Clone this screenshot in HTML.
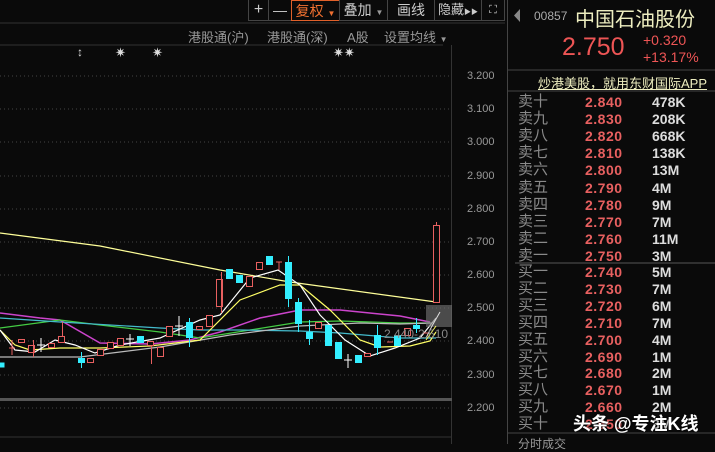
<!DOCTYPE html>
<html><head><meta charset="utf-8"><style>
html,body{margin:0;padding:0;background:#0a0a0a;width:715px;height:444px;overflow:hidden;font-family:"Liberation Sans","Noto Sans CJK SC",sans-serif}
.a{position:absolute;white-space:nowrap}
.tb{position:absolute;top:0;height:21px;border:1px solid #444;border-top:none;box-sizing:border-box;color:#ccc;font-size:14px;line-height:20px;text-align:center;white-space:nowrap;overflow:hidden}
.tab{color:#999;font-size:13px}
.row{position:absolute;left:0;width:207px;height:16px;font-size:14px;line-height:16px}
.row .l{position:absolute;left:10px;color:#8a8a8a;font-size:15px}
.row .p{position:absolute;left:77px;color:#e86060;font-weight:bold;letter-spacing:0.5px}
.row .v{position:absolute;left:144px;color:#ddd;font-weight:bold}
</style></head><body>
<svg class="a" style="left:0;top:0" width="715" height="444">
<line x1="0" y1="23" x2="505" y2="23" stroke="#333"/>
<line x1="0" y1="45" x2="443" y2="45" stroke="#333"/>
<g stroke="#444" stroke-dasharray="1,3">
<line x1="0" y1="76" x2="451" y2="76"/><line x1="0" y1="109" x2="451" y2="109"/><line x1="0" y1="142" x2="451" y2="142"/><line x1="0" y1="176" x2="451" y2="176"/><line x1="0" y1="209" x2="451" y2="209"/><line x1="0" y1="242" x2="451" y2="242"/><line x1="0" y1="275" x2="451" y2="275"/><line x1="0" y1="308" x2="451" y2="308"/><line x1="0" y1="341" x2="451" y2="341"/><line x1="0" y1="375" x2="451" y2="375"/><line x1="0" y1="408" x2="451" y2="408"/>
</g>
<line x1="451.5" y1="45" x2="451.5" y2="444" stroke="#333"/>
<rect x="0" y="398" width="452" height="3" fill="#555"/>
<line x1="0" y1="437" x2="452" y2="437" stroke="#333"/>
<line x1="507.5" y1="0" x2="507.5" y2="444" stroke="#444"/>
<line x1="508" y1="70" x2="715" y2="70" stroke="#444"/>
<line x1="508" y1="91" x2="715" y2="91" stroke="#444"/>
<line x1="515" y1="263" x2="715" y2="263" stroke="#555"/>
<line x1="508" y1="433" x2="715" y2="433" stroke="#444"/>
<polygon points="520,9 520,22 514,15.5" fill="#888"/>
<polyline fill="none" stroke="#ffff99" stroke-width="1.2" points="0,233 100,246 220,270 290,282 436,302"/>
<polyline fill="none" stroke="#cc44cc" stroke-width="1.5" points="0,313 40,318 60,320 100,343 150,344 190,340 220,332 260,318 300,310 340,310 400,316 430,322"/>
<polyline fill="none" stroke="#44cc44" stroke-width="1.2" points="0,328 60,320 100,325 160,332 200,338 250,330 300,322 340,321 400,323 430,323"/>
<polyline fill="none" stroke="#44bbcc" stroke-width="1.2" points="0,318 60,322 160,328 200,330 240,330 300,331 340,333 400,338 436,338"/>
<polyline fill="none" stroke="#bbbbbb" stroke-width="1.2" points="0,357 80,357 160,347 230,335 300,326 360,323 400,324 432,323"/>
<polyline fill="none" stroke="#ffff66" stroke-width="1.2" points="0,330 15,345 30,350 60,348 100,348 150,346 200,340 240,300 280,285 300,285 330,310 360,340 380,347 410,346 430,341 436,332"/>
<polyline fill="none" stroke="#ffffff" stroke-width="1.2" points="0,330 15,350 35,352 55,340 75,345 95,353 120,345 160,338 200,320 220,315 250,278 278,270 300,285 320,315 345,340 370,356 395,348 420,338 436,318"/>
<g stroke="#e86060" fill="#0a0a0a" stroke-width="1">
<rect x="18.5" y="339.5" width="6" height="3"/><rect x="28.5" y="345.5" width="6" height="7"/><rect x="48.5" y="343.5" width="6" height="4"/><rect x="58.5" y="336.5" width="6" height="6"/>
<rect x="87.5" y="358.5" width="6" height="4"/><rect x="97.5" y="349.5" width="6" height="6"/><rect x="107.5" y="342.5" width="6" height="6"/><rect x="117.5" y="338.5" width="6" height="7"/>
<rect x="147.5" y="341.5" width="6" height="4"/><rect x="157.5" y="347.5" width="6" height="9"/><rect x="166.5" y="326.5" width="6" height="10"/><rect x="196.5" y="326.5" width="6" height="3"/><rect x="206.5" y="315.5" width="6" height="11"/>
<rect x="216.5" y="279.5" width="6" height="27"/><rect x="246.5" y="276.5" width="6" height="10"/><rect x="256.5" y="262.5" width="6" height="7"/><rect x="315.5" y="322.5" width="6" height="6"/><rect x="364.5" y="353.5" width="6" height="3"/><rect x="404.5" y="328.5" width="6" height="7"/><rect x="433.5" y="225.5" width="6" height="77"/>
<line x1="221.5" y1="272" x2="221.5" y2="313"/><line x1="151.5" y1="345" x2="151.5" y2="364"/><line x1="62.5" y1="322" x2="62.5" y2="336"/><line x1="436.5" y1="222" x2="436.5" y2="225"/><line x1="33.5" y1="340" x2="33.5" y2="357"/><line x1="279" y1="262" x2="279" y2="270"/><line x1="276" y1="262" x2="282" y2="262"/><line x1="12" y1="340" x2="12" y2="355"/><line x1="9" y1="348" x2="15" y2="348"/><line x1="423" y1="333" x2="429" y2="333"/><line x1="387" y1="342" x2="393" y2="342"/>
</g>
<g fill="#33eeff" stroke="#33eeff">
<rect x="0" y="363" width="4" height="4"/><rect x="78.5" y="358.5" width="6" height="4"/><rect x="137.5" y="336.5" width="6" height="6"/><rect x="186.5" y="322.5" width="6" height="15"/><rect x="226.5" y="269.5" width="6" height="9"/><rect x="236.5" y="275.5" width="6" height="7"/><rect x="266.5" y="256.5" width="6" height="8"/><rect x="285.5" y="262.5" width="6" height="36"/><rect x="295.5" y="302.5" width="6" height="21"/><rect x="306.5" y="332.5" width="6" height="6"/><rect x="325.5" y="325.5" width="6" height="20"/><rect x="335.5" y="342.5" width="6" height="16"/><rect x="355.5" y="355.5" width="6" height="7"/><rect x="374.5" y="335.5" width="6" height="12"/><rect x="394.5" y="335.5" width="6" height="10"/><rect x="413.5" y="325.5" width="6" height="3"/>
<line x1="81.5" y1="352" x2="81.5" y2="368"/><line x1="189.5" y1="318" x2="189.5" y2="347"/><line x1="288.5" y1="256" x2="288.5" y2="307"/><line x1="298.5" y1="298" x2="298.5" y2="332"/><line x1="309.5" y1="320" x2="309.5" y2="345"/><line x1="377.5" y1="325" x2="377.5" y2="355"/><line x1="416.5" y1="318" x2="416.5" y2="333"/>
</g>
<g stroke="#fff"><line x1="41" y1="338" x2="41" y2="352"/><line x1="37" y1="345" x2="45" y2="345"/><line x1="130" y1="334" x2="130" y2="346"/><line x1="126" y1="339" x2="134" y2="339"/><line x1="179" y1="316" x2="179" y2="336"/><line x1="175" y1="326" x2="183" y2="326"/><line x1="348" y1="354" x2="348" y2="368"/><line x1="344" y1="360" x2="352" y2="360"/></g>
<rect x="426" y="305" width="26" height="22" fill="#777" opacity="0.6"/>
<polyline fill="none" stroke="#ddd" points="426,338 432,326 440,312"/>
<polyline fill="none" stroke="#ffff66" points="426,340 436,326"/>
</svg>
<div class="tb" style="left:248px;width:21px;font-size:16px">+</div>
<div class="tb" style="left:268px;width:24px">—</div>
<div class="tb" style="left:291px;width:49px;border:1px solid #e0602a;color:#f07030">复权 <span style="font-size:8px">▼</span></div>
<div class="tb" style="left:339px;width:49px">叠加 <span style="font-size:8px;color:#999">▼</span></div>
<div class="tb" style="left:387px;width:48px">画线</div>
<div class="tb" style="left:434px;width:48px;font-size:13px">隐藏<span style="font-size:7px">▶▶</span></div>
<div class="tb" style="left:481px;width:24px;font-size:11px">⛶</div>
<div class="a tab" style="left:188px;top:27px">港股通(沪)</div>
<div class="a tab" style="left:267px;top:27px">港股通(深)</div>
<div class="a tab" style="left:347px;top:27px">A股</div>
<div class="a tab" style="left:384px;top:27px">设置均线 <span style="font-size:8px">▼</span></div>
<div class="a" style="left:77px;top:45px;color:#ddd;font-size:12px">↕</div>
<div class="a" style="left:115px;top:45px;color:#ddd;font-size:13px">✷</div>
<div class="a" style="left:152px;top:45px;color:#ddd;font-size:13px">✷</div>
<div class="a" style="left:333px;top:45px;color:#ddd;font-size:13px">✷✷</div>
<div class="a" style="left:467px;top:69px;color:#999;font-size:11px;line-height:14px">
<div style="position:absolute;top:0">3.200</div><div style="position:absolute;top:33px">3.100</div><div style="position:absolute;top:66px">3.000</div><div style="position:absolute;top:100px">2.900</div><div style="position:absolute;top:133px">2.800</div><div style="position:absolute;top:166px">2.700</div><div style="position:absolute;top:199px">2.600</div><div style="position:absolute;top:232px">2.500</div><div style="position:absolute;top:265px">2.400</div><div style="position:absolute;top:299px">2.300</div><div style="position:absolute;top:332px">2.200</div></div>
<div class="a" style="left:384px;top:327px;color:#888;font-size:12px">2.440-2.510</div>
<div class="a" style="left:534px;top:9px;color:#aaa;font-size:12px">00857</div>
<div class="a" style="left:575px;top:3px;color:#eeeec0;font-size:20px">中国石油股份</div>
<div class="a" style="left:562px;top:33px;color:#ee5555;font-size:25px">2.750</div>
<div class="a" style="left:643px;top:32px;color:#ee5555;font-size:14px;line-height:17px">+0.320<br>+13.17%</div>
<div class="a" style="left:538px;top:73px;color:#eeeec0;font-size:13px;text-decoration:underline">炒港美股，就用东财国际APP</div>
<div class="a" style="left:508px;top:94px;width:207px">
<div class="row" style="top:0"><span class="l">卖十</span><span class="p">2.840</span><span class="v">478K</span></div>
<div class="row" style="top:17.1px"><span class="l">卖九</span><span class="p">2.830</span><span class="v">208K</span></div>
<div class="row" style="top:34.2px"><span class="l">卖八</span><span class="p">2.820</span><span class="v">668K</span></div>
<div class="row" style="top:51.3px"><span class="l">卖七</span><span class="p">2.810</span><span class="v">138K</span></div>
<div class="row" style="top:68.4px"><span class="l">卖六</span><span class="p">2.800</span><span class="v">13M</span></div>
<div class="row" style="top:85.5px"><span class="l">卖五</span><span class="p">2.790</span><span class="v">4M</span></div>
<div class="row" style="top:102.6px"><span class="l">卖四</span><span class="p">2.780</span><span class="v">9M</span></div>
<div class="row" style="top:119.7px"><span class="l">卖三</span><span class="p">2.770</span><span class="v">7M</span></div>
<div class="row" style="top:136.8px"><span class="l">卖二</span><span class="p">2.760</span><span class="v">11M</span></div>
<div class="row" style="top:153.9px"><span class="l">卖一</span><span class="p">2.750</span><span class="v">3M</span></div>
<div class="row" style="top:170px"><span class="l">买一</span><span class="p">2.740</span><span class="v">5M</span></div>
<div class="row" style="top:186.9px"><span class="l">买二</span><span class="p">2.730</span><span class="v">7M</span></div>
<div class="row" style="top:203.8px"><span class="l">买三</span><span class="p">2.720</span><span class="v">6M</span></div>
<div class="row" style="top:220.7px"><span class="l">买四</span><span class="p">2.710</span><span class="v">7M</span></div>
<div class="row" style="top:237.6px"><span class="l">买五</span><span class="p">2.700</span><span class="v">4M</span></div>
<div class="row" style="top:254.5px"><span class="l">买六</span><span class="p">2.690</span><span class="v">1M</span></div>
<div class="row" style="top:271.4px"><span class="l">买七</span><span class="p">2.680</span><span class="v">2M</span></div>
<div class="row" style="top:288.3px"><span class="l">买八</span><span class="p">2.670</span><span class="v">1M</span></div>
<div class="row" style="top:305.2px"><span class="l">买九</span><span class="p">2.660</span><span class="v">2M</span></div>
<div class="row" style="top:322.1px"><span class="l">买十</span><span class="p">2.650</span><span class="v">3M</span></div>
</div>
<div class="a" style="left:518px;top:435px;color:#999;font-size:12px">分时成交</div>
<div class="a" style="left:573px;top:410px;color:#fff;font-size:18px;font-weight:bold;text-shadow:0 0 2px #000">头条 @专注K线</div>
</body></html>
